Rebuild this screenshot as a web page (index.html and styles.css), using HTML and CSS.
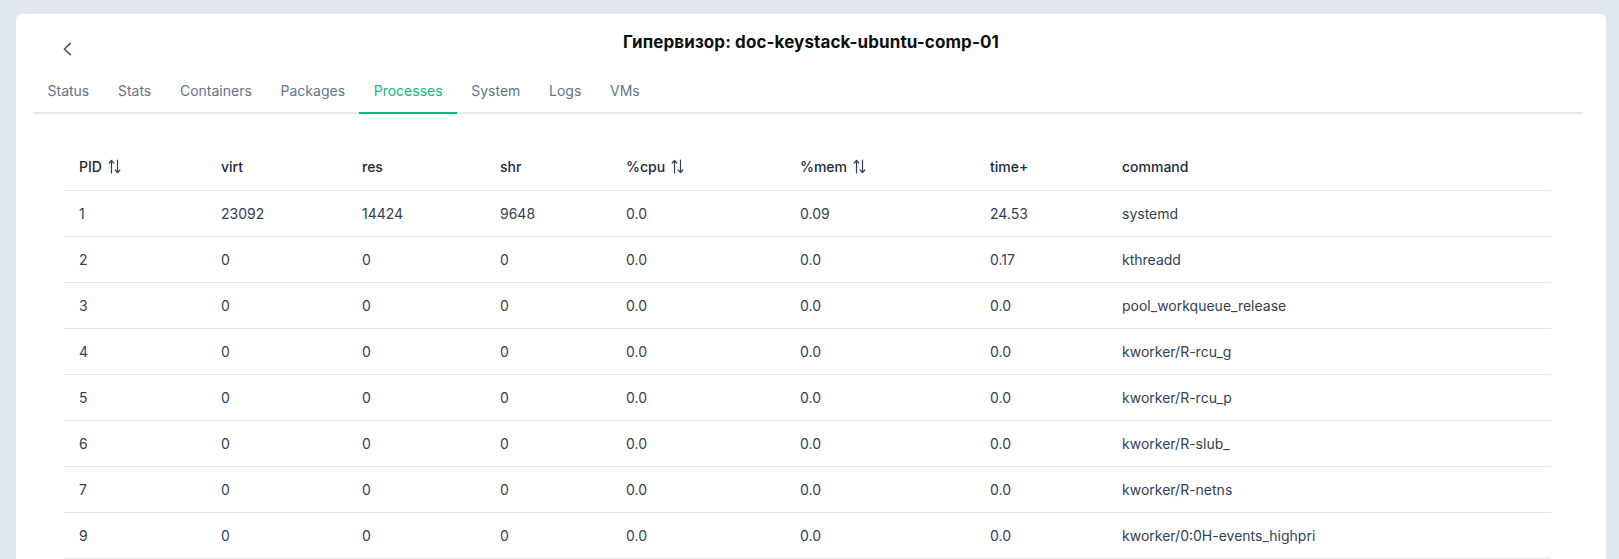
FILE: index.html
```html
<!DOCTYPE html>
<html lang="ru">
<head>
    <meta charset="UTF-8">
    <meta name="viewport" content="width=device-width, initial-scale=1.0">
    <title>Гипервизор: doc-keystack-ubuntu-comp-01</title>
    <link rel="stylesheet" href="styles.css">
</head>
<body>
    <div class="card">
        <div class="card-head">
            <button class="back-btn" title="Назад">
                <svg width="10" height="14" viewBox="0 0 10 14"><path d="M8.3 1.3 L2.4 7 L8.3 12.7" fill="none" stroke="#475569" stroke-width="1.6" stroke-linecap="round" stroke-linejoin="round"/></svg>
            </button>
            <h1 class="page-title">Гипервизор: doc-keystack-ubuntu-comp-01</h1>
            <div></div>
        </div>

        <nav class="tabs">
            <a class="tab">Status</a>
            <a class="tab">Stats</a>
            <a class="tab">Containers</a>
            <a class="tab">Packages</a>
            <a class="tab active">Processes</a>
            <a class="tab">System</a>
            <a class="tab">Logs</a>
            <a class="tab">VMs</a>
        </nav>

        <div class="table-wrap">
            <table class="proc-table">
                <thead>
                    <tr>
                        <th class="c-pid">PID <span class="sort"><svg width="13" height="15" viewBox="0 0 13 15"><path d="M3.5 14V1.5M1.2 4L3.5 1.3 5.8 4M9.5 1v12.5M7.2 11l2.3 2.7L11.8 11" fill="none" stroke="#334155" stroke-width="1.2" stroke-linecap="round" stroke-linejoin="round"/></svg></span></th>
                        <th class="c-virt">virt</th>
                        <th class="c-res">res</th>
                        <th class="c-shr">shr</th>
                        <th class="c-cpu">%cpu <span class="sort"><svg width="13" height="15" viewBox="0 0 13 15"><path d="M3.5 14V1.5M1.2 4L3.5 1.3 5.8 4M9.5 1v12.5M7.2 11l2.3 2.7L11.8 11" fill="none" stroke="#334155" stroke-width="1.2" stroke-linecap="round" stroke-linejoin="round"/></svg></span></th>
                        <th class="c-mem">%mem <span class="sort"><svg width="13" height="15" viewBox="0 0 13 15"><path d="M3.5 14V1.5M1.2 4L3.5 1.3 5.8 4M9.5 1v12.5M7.2 11l2.3 2.7L11.8 11" fill="none" stroke="#334155" stroke-width="1.2" stroke-linecap="round" stroke-linejoin="round"/></svg></span></th>
                        <th class="c-time">time+</th>
                        <th class="c-cmd">command</th>
                    </tr>
                </thead>
                <tbody>
                    <tr><td>1</td><td>23092</td><td>14424</td><td>9648</td><td>0.0</td><td>0.09</td><td>24.53</td><td>systemd</td></tr>
                    <tr><td>2</td><td>0</td><td>0</td><td>0</td><td>0.0</td><td>0.0</td><td>0.17</td><td>kthreadd</td></tr>
                    <tr><td>3</td><td>0</td><td>0</td><td>0</td><td>0.0</td><td>0.0</td><td>0.0</td><td>pool_workqueue_release</td></tr>
                    <tr><td>4</td><td>0</td><td>0</td><td>0</td><td>0.0</td><td>0.0</td><td>0.0</td><td>kworker/R-rcu_g</td></tr>
                    <tr><td>5</td><td>0</td><td>0</td><td>0</td><td>0.0</td><td>0.0</td><td>0.0</td><td>kworker/R-rcu_p</td></tr>
                    <tr><td>6</td><td>0</td><td>0</td><td>0</td><td>0.0</td><td>0.0</td><td>0.0</td><td>kworker/R-slub_</td></tr>
                    <tr><td>7</td><td>0</td><td>0</td><td>0</td><td>0.0</td><td>0.0</td><td>0.0</td><td>kworker/R-netns</td></tr>
                    <tr><td>9</td><td>0</td><td>0</td><td>0</td><td>0.0</td><td>0.0</td><td>0.0</td><td>kworker/0:0H-events_highpri</td></tr>
                </tbody>
            </table>
        </div>
    </div>
</body>
</html>
```

FILE: styles.css
```css
* {
    box-sizing: border-box;
}

body {
    margin: 0;
    height: 559px;
    overflow: hidden;
    padding: 14px 13px 0 16px;
    background: #e2e8f0;
    font-family: Inter, "Noto Sans", sans-serif;
    color: #334155;
}

.card {
    background: #fff;
    border-radius: 6px 6px 0 0;
    min-height: 600px;
}

/* header: back button + centered title */
.card-head {
    display: grid;
    grid-template-columns: 1fr auto 1fr;
    align-items: start;
    padding-top: 16px;
}

.back-btn {
    justify-self: start;
    margin: 12px 0 0 46px;
    padding: 0;
    border: none;
    background: none;
    cursor: pointer;
    line-height: 0;
}

.page-title {
    margin: 0;
    font-size: 17px;
    line-height: 24px;
    font-weight: 700;
    letter-spacing: 0.1px;
    color: #0f0f0f;
}

/* tabs */
.tabs {
    display: flex;
    margin: 15px 23px 0 17px;
    border-bottom: 2px solid #e5e7eb;
}

.tab {
    padding: 10px 14.35px 11px;
    margin-bottom: -2px;
    font-size: 14px;
    line-height: 20px;
    color: #64748b;
    border-bottom: 2px solid transparent;
    cursor: pointer;
}

.tab:first-child {
    padding-left: 14.5px;
}

.tab.active {
    color: #10b981;
    border-bottom-color: #10b981;
}

/* processes table */
.table-wrap {
    padding: 29px 55px 0 48px;
}

.proc-table {
    width: 100%;
    border-collapse: collapse;
    table-layout: fixed;
    font-size: 14px;
}

.proc-table th,
.proc-table td {
    text-align: left;
    padding: 0 15px;
    border-bottom: 1px solid #e5e7eb;
    white-space: nowrap;
}

.proc-table th {
    height: 47px;
    font-weight: 500;
    color: #1e293b;
}

.proc-table td {
    height: 46px;
    color: #334155;
}

.sort {
    display: inline-block;
    vertical-align: -2px;
    margin-left: 2px;
    line-height: 0;
}

.c-pid { width: 142px; }
.c-virt { width: 141px; }
.c-res { width: 138px; }
.c-shr { width: 126px; }
.c-cpu { width: 174px; }
.c-mem { width: 190px; }
.c-time { width: 132px; }
.c-cmd { width: auto; }
```
